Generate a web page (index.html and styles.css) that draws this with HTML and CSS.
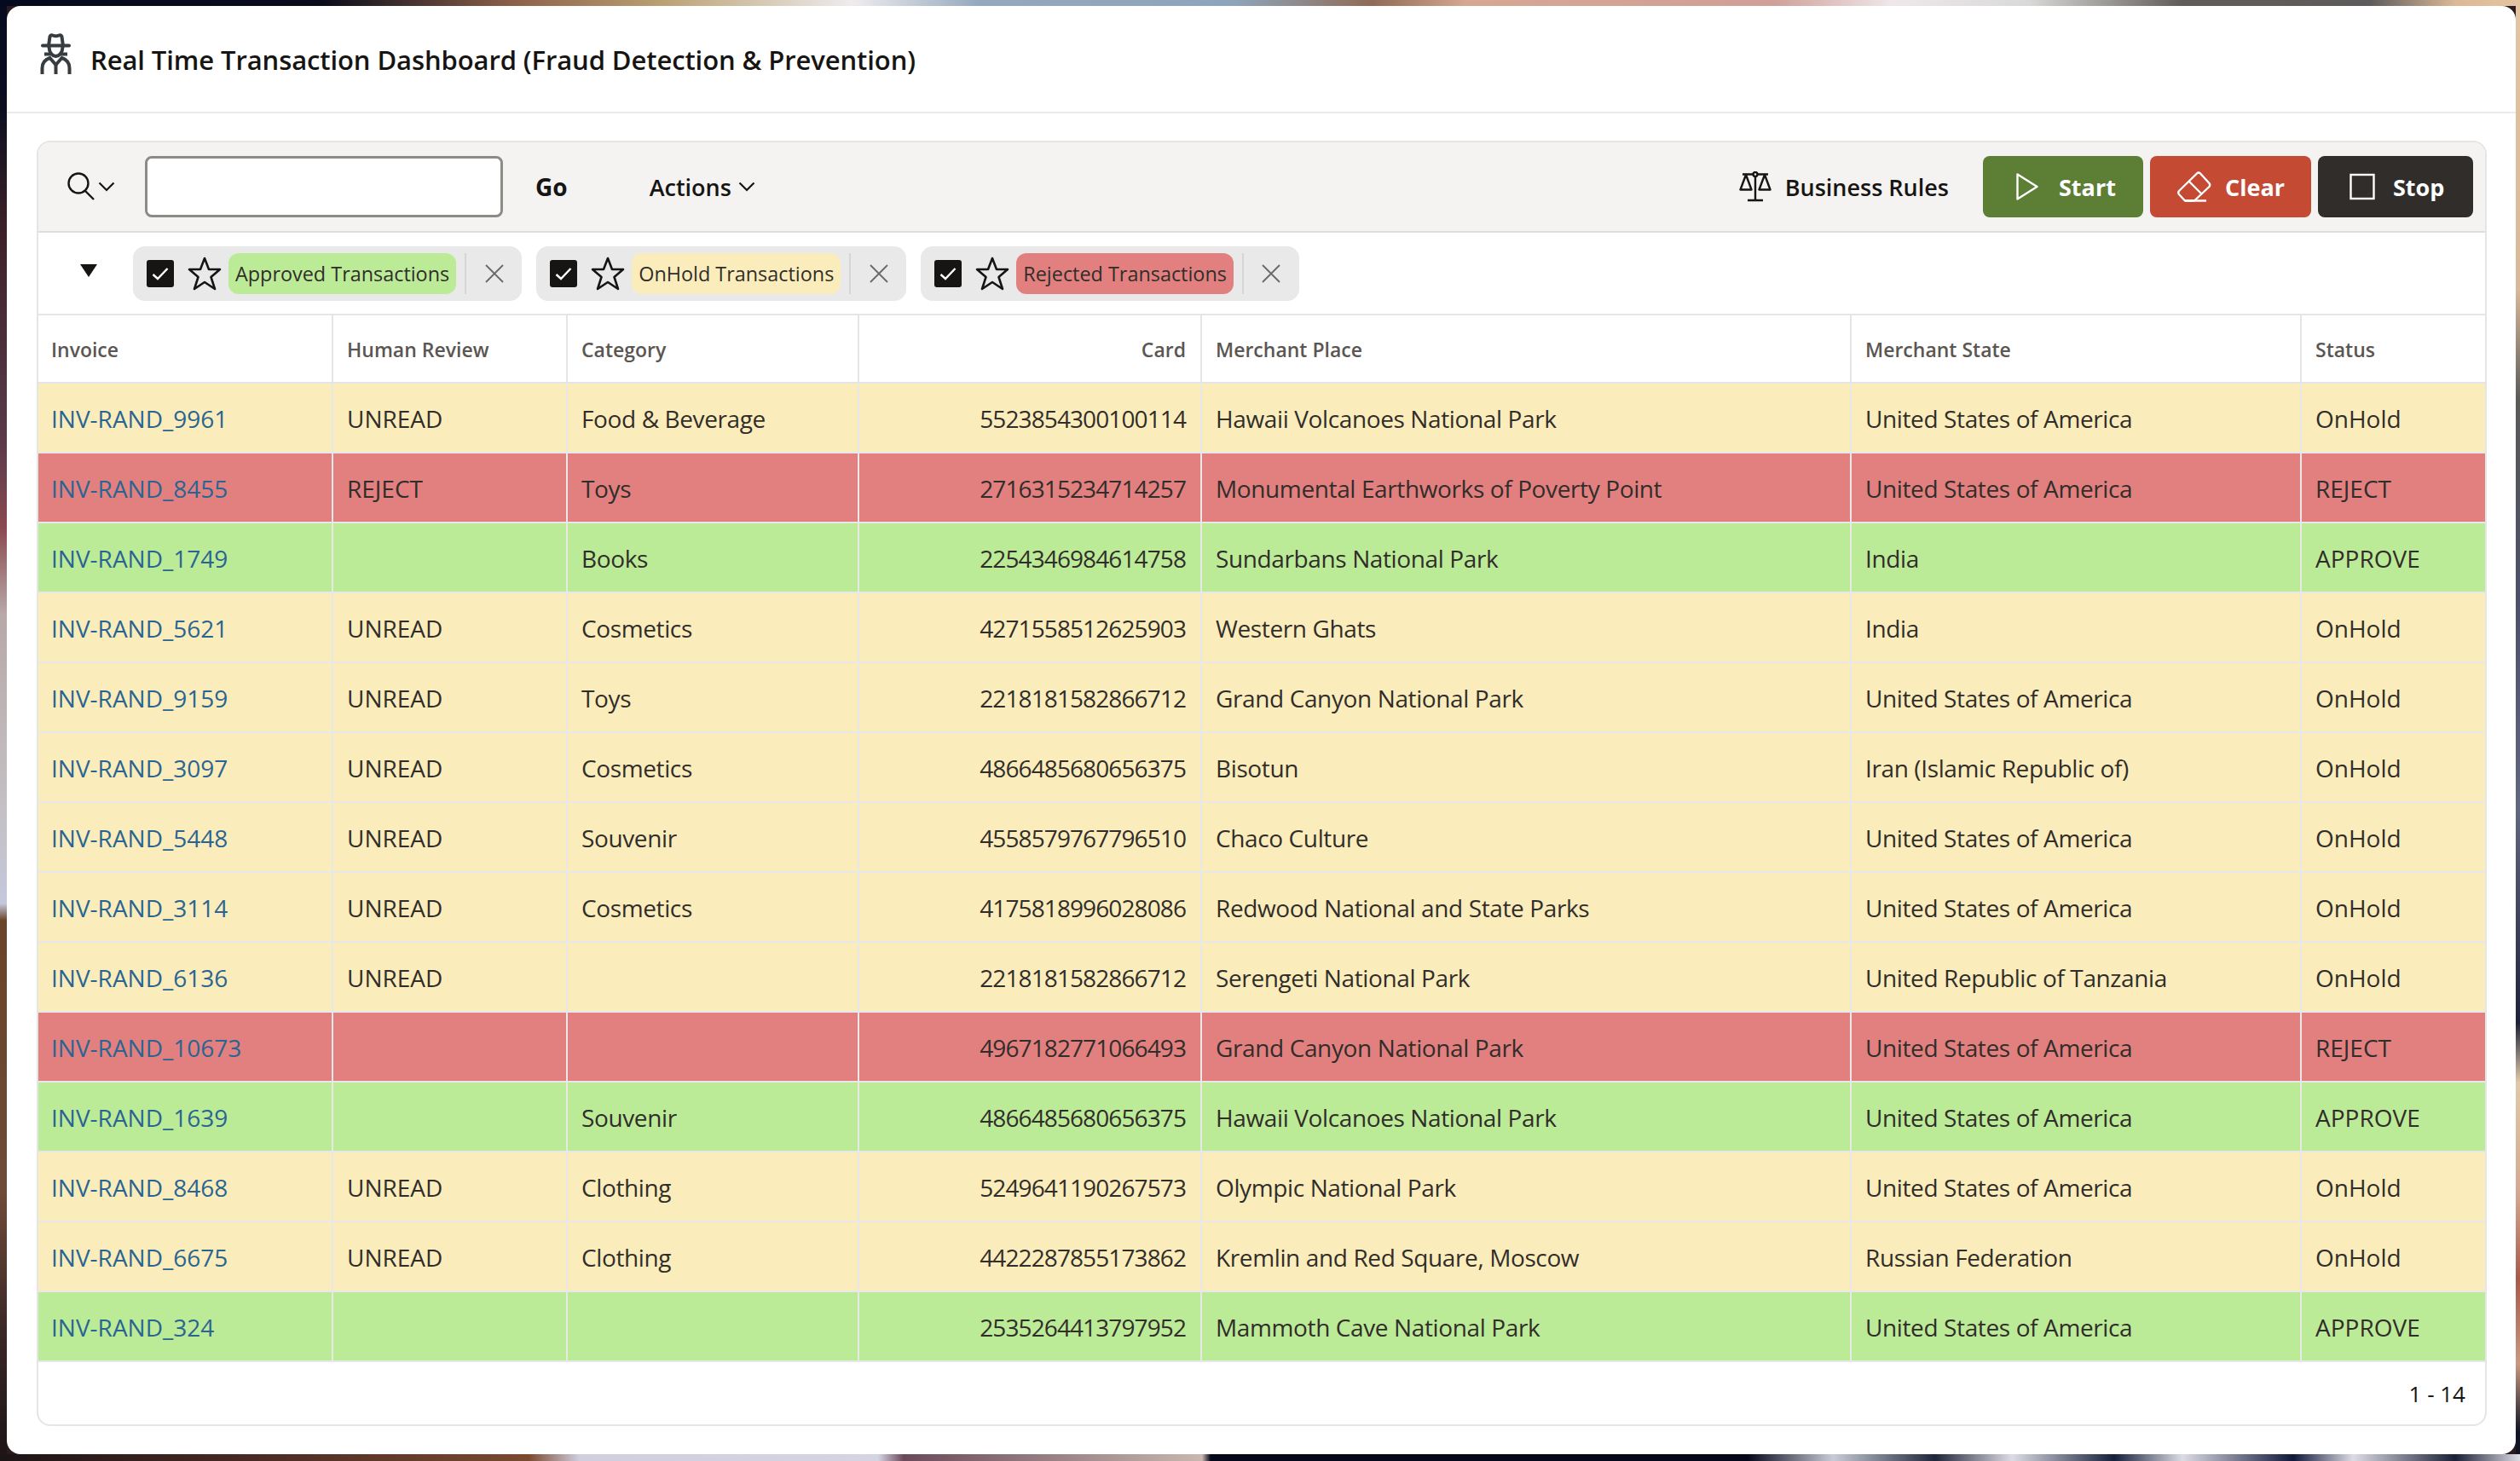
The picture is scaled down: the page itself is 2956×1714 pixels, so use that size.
FILE: index.html
```html
<!DOCTYPE html>
<html lang="en">
<head>
    <meta charset="UTF-8">
    <title>Real Time Transaction Dashboard</title>
    <link rel="stylesheet" href="styles.css">
</head>
<body>
<div class="window">
    <header class="page-head">
        <svg class="spy-icon" viewBox="0 0 37 48" fill="none" stroke="#363c40" stroke-width="4">
            <path d="M10 15 L11.500 4 Q12.500 1.500 15 2.500 Q18.500 4 22 2.500 Q24.500 1.500 25.500 4 L27 15"/>
            <path d="M3 14.500 H34" stroke-linecap="round"/>
            <path d="M10.500 16 Q11 26 18.500 27 Q26 26 26.500 16"/>
            <path d="M5 24.500 H13 M24 24.500 H32"/>
            <path d="M2.500 48 V41 Q2.500 32 11.500 29 L18.500 37 L25.500 29 Q34.500 32 34.500 41 V48"/>
            <path d="M18.500 36 V48"/>
        </svg>
        <h1>Real Time Transaction Dashboard (Fraud Detection &amp; Prevention)</h1>
    </header>

    <main class="report">
        <div class="toolbar">
            <button class="search-toggle" type="button">
                <svg width="36" height="36" viewBox="0 0 36 36" fill="none" stroke="#161513" stroke-width="2.4">
                    <circle cx="15" cy="14" r="11.5"/>
                    <path d="M23 23 L33 33"/>
                </svg>
                <svg width="20" height="12" viewBox="0 0 20 12" fill="none" stroke="#161513" stroke-width="2.2">
                    <path d="M1.5 1.5 L10 10 L18.5 1.5"/>
                </svg>
            </button>
            <input class="search-input" type="text">
            <button class="go-btn" type="button">Go</button>
            <button class="actions-btn" type="button">Actions
                <svg width="20" height="12" viewBox="0 0 20 12" fill="none" stroke="#161513" stroke-width="2.2">
                    <path d="M1.5 1.5 L10 10 L18.5 1.5"/>
                </svg>
            </button>
            <div class="toolbar-right">
                <button class="rules-btn" type="button">
                    <svg width="38" height="36" viewBox="0 0 38 36" fill="none" stroke="#161513" stroke-width="2.4">
                        <circle cx="19" cy="3.5" r="2.5"/>
                        <path d="M19 6 V33 M10 34 H28 M4 3.5 H16.5 M21.5 3.5 H34"/>
                        <path d="M8 4 L1.5 21.5 H14.5 Z M30 4 L23.5 21.5 H36.5 Z" stroke-linejoin="round"/>
                    </svg>
                    Business Rules
                </button>
                <button class="action-btn start" type="button">
                    <svg width="26" height="32" viewBox="0 0 26 32" fill="none" stroke="#fff" stroke-width="2.4">
                        <path d="M1.500 1.500 L24.500 16 L1.500 30.500 Z" stroke-linejoin="round"/>
                    </svg>
                    Start
                </button>
                <button class="action-btn clear" type="button">
                    <svg width="40" height="36" viewBox="0 0 40 36" fill="none" stroke="#fff" stroke-width="2.4">
                        <path d="M23 2.500 Q25 0.500 27 2.500 L37.500 14 Q39 16 37.500 18 L20 34.500 H9 L2 27 Q0.500 25 2 23 Z" stroke-linejoin="round"/>
                        <path d="M14 12 L28 26 M9 34.500 H34"/>
                    </svg>
                    Clear
                </button>
                <button class="action-btn stop" type="button">
                    <svg width="30" height="32" viewBox="0 0 30 32" fill="none" stroke="#fff" stroke-width="2.4">
                        <rect x="1.500" y="2" width="27" height="28"/>
                    </svg>
                    Stop
                </button>
            </div>
        </div>

        <div class="filters">
            <span class="filters-toggle"></span>
            <div class="chip">
                <span class="chip-check"><svg width="20" height="16" viewBox="0 0 20 16" fill="none" stroke="#fff" stroke-width="2.4"><path d="M1.500 9 L7 14 L18.500 2"/></svg></span>
                <svg class="chip-star" width="40" height="40" viewBox="0 0 40 40" fill="none" stroke="#161513" stroke-width="2.600" stroke-linejoin="round"><path d="M20 2 L25 15 L38 15 L27.500 24 L32 38 L20 30 L8 38 L12.500 24 L2 15 L15 15 Z"/></svg>
                <span class="chip-label approved">Approved Transactions</span>
                <button class="chip-close" type="button"><svg width="22" height="22" viewBox="0 0 22 22" stroke="#6b6965" stroke-width="1.800"><path d="M1 1 L21 21 M21 1 L1 21"/></svg></button>
            </div>
            <div class="chip">
                <span class="chip-check"><svg width="20" height="16" viewBox="0 0 20 16" fill="none" stroke="#fff" stroke-width="2.4"><path d="M1.500 9 L7 14 L18.500 2"/></svg></span>
                <svg class="chip-star" width="40" height="40" viewBox="0 0 40 40" fill="none" stroke="#161513" stroke-width="2.600" stroke-linejoin="round"><path d="M20 2 L25 15 L38 15 L27.500 24 L32 38 L20 30 L8 38 L12.500 24 L2 15 L15 15 Z"/></svg>
                <span class="chip-label onhold">OnHold Transactions</span>
                <button class="chip-close" type="button"><svg width="22" height="22" viewBox="0 0 22 22" stroke="#6b6965" stroke-width="1.800"><path d="M1 1 L21 21 M21 1 L1 21"/></svg></button>
            </div>
            <div class="chip">
                <span class="chip-check"><svg width="20" height="16" viewBox="0 0 20 16" fill="none" stroke="#fff" stroke-width="2.4"><path d="M1.500 9 L7 14 L18.500 2"/></svg></span>
                <svg class="chip-star" width="40" height="40" viewBox="0 0 40 40" fill="none" stroke="#161513" stroke-width="2.600" stroke-linejoin="round"><path d="M20 2 L25 15 L38 15 L27.500 24 L32 38 L20 30 L8 38 L12.500 24 L2 15 L15 15 Z"/></svg>
                <span class="chip-label rejected">Rejected Transactions</span>
                <button class="chip-close" type="button"><svg width="22" height="22" viewBox="0 0 22 22" stroke="#6b6965" stroke-width="1.800"><path d="M1 1 L21 21 M21 1 L1 21"/></svg></button>
            </div>
        </div>

        <table class="grid">
            <colgroup>
                <col class="c-invoice"><col class="c-review"><col class="c-category"><col class="c-card"><col class="c-place"><col class="c-state"><col class="c-status">
            </colgroup>
            <thead>
                <tr><th>Invoice</th><th>Human Review</th><th>Category</th><th class="num">Card</th><th>Merchant Place</th><th>Merchant State</th><th>Status</th></tr>
            </thead>
            <tbody>
                <tr class="onhold"><td><a href="#">INV-RAND_9961</a></td><td>UNREAD</td><td>Food &amp; Beverage</td><td class="num">5523854300100114</td><td>Hawaii Volcanoes National Park</td><td>United States of America</td><td>OnHold</td></tr>
                <tr class="rejected"><td><a href="#">INV-RAND_8455</a></td><td>REJECT</td><td>Toys</td><td class="num">2716315234714257</td><td>Monumental Earthworks of Poverty Point</td><td>United States of America</td><td>REJECT</td></tr>
                <tr class="approved"><td><a href="#">INV-RAND_1749</a></td><td></td><td>Books</td><td class="num">2254346984614758</td><td>Sundarbans National Park</td><td>India</td><td>APPROVE</td></tr>
                <tr class="onhold"><td><a href="#">INV-RAND_5621</a></td><td>UNREAD</td><td>Cosmetics</td><td class="num">4271558512625903</td><td>Western Ghats</td><td>India</td><td>OnHold</td></tr>
                <tr class="onhold"><td><a href="#">INV-RAND_9159</a></td><td>UNREAD</td><td>Toys</td><td class="num">2218181582866712</td><td>Grand Canyon National Park</td><td>United States of America</td><td>OnHold</td></tr>
                <tr class="onhold"><td><a href="#">INV-RAND_3097</a></td><td>UNREAD</td><td>Cosmetics</td><td class="num">4866485680656375</td><td>Bisotun</td><td>Iran (Islamic Republic of)</td><td>OnHold</td></tr>
                <tr class="onhold"><td><a href="#">INV-RAND_5448</a></td><td>UNREAD</td><td>Souvenir</td><td class="num">4558579767796510</td><td>Chaco Culture</td><td>United States of America</td><td>OnHold</td></tr>
                <tr class="onhold"><td><a href="#">INV-RAND_3114</a></td><td>UNREAD</td><td>Cosmetics</td><td class="num">4175818996028086</td><td>Redwood National and State Parks</td><td>United States of America</td><td>OnHold</td></tr>
                <tr class="onhold"><td><a href="#">INV-RAND_6136</a></td><td>UNREAD</td><td></td><td class="num">2218181582866712</td><td>Serengeti National Park</td><td>United Republic of Tanzania</td><td>OnHold</td></tr>
                <tr class="rejected"><td><a href="#">INV-RAND_10673</a></td><td></td><td></td><td class="num">4967182771066493</td><td>Grand Canyon National Park</td><td>United States of America</td><td>REJECT</td></tr>
                <tr class="approved"><td><a href="#">INV-RAND_1639</a></td><td></td><td>Souvenir</td><td class="num">4866485680656375</td><td>Hawaii Volcanoes National Park</td><td>United States of America</td><td>APPROVE</td></tr>
                <tr class="onhold"><td><a href="#">INV-RAND_8468</a></td><td>UNREAD</td><td>Clothing</td><td class="num">5249641190267573</td><td>Olympic National Park</td><td>United States of America</td><td>OnHold</td></tr>
                <tr class="onhold"><td><a href="#">INV-RAND_6675</a></td><td>UNREAD</td><td>Clothing</td><td class="num">4422287855173862</td><td>Kremlin and Red Square, Moscow</td><td>Russian Federation</td><td>OnHold</td></tr>
                <tr class="approved"><td><a href="#">INV-RAND_324</a></td><td></td><td></td><td class="num">2535264413797952</td><td>Mammoth Cave National Park</td><td>United States of America</td><td>APPROVE</td></tr>
            </tbody>
        </table>

        <div class="pager">1 - 14</div>
    </main>
</div>
</body>
</html>
```

FILE: styles.css
```css
* {
    box-sizing: border-box;
}

html, body {
    height: 100%;
    margin: 0;
    overflow: hidden;
}

/* blurred desktop wallpaper showing around the window */
body {
    padding: 7px 5px 8px 8px;
    display: flex;
    font-family: "Open Sans", "Noto Sans", sans-serif;
    color: #312d2a;
    background-color: #2a1c1e;
    background-image:
        linear-gradient(90deg, #050a1e 0, #0a0c1c 380px, #8c5f48 600px, #bba274 780px, #efecef 1000px, #93a8bd 1150px, #8ea4ba 1450px, #8f6b55 1610px, #d7a793 1720px, #cf9f98 2080px, #efe8ea 2220px, #d9d9d8 2380px, #605c58 2560px, #5d5b5b 2780px, #dcb996 2880px, #e4c4a0 2956px),
        linear-gradient(90deg, #1c1416 0, #4a2a24 300px, #7a4a30 620px, #d0cfe0 680px, #d4d4e2 1030px, #6a4a5a 1060px, #c8b8b0 1410px, #05081a 1420px, #05081a 2050px, #c8ccd8 2150px, #20263a 2270px, #dcdce4 2360px, #15203a 2480px, #dcdce4 2560px, #10183a 2690px, #dcdce4 2760px, #1a2036 2880px, #dcdce4 2956px),
        linear-gradient(180deg, #050a1e 0, #0c0e20 130px, #3a2028 260px, #5a3a4a 520px, #8a4a50 620px, #b8a8a8 720px, #c4c0c4 950px, #c4c8dc 1060px, #6a4428 1080px, #6e4a38 1400px, #3a2826 1560px, #1c1416 1714px),
        linear-gradient(180deg, #e4c4a0 0, #d8b898 340px, #5a5a58 470px, #4a5068 700px, #60687e 950px, #1e2238 1200px, #e0c8a8 1270px, #d4a890 1400px, #a85a48 1500px, #c89880 1600px, #101424 1680px, #101424 1714px);
    background-repeat: no-repeat;
    background-size: 100% 7px, 100% 8px, 8px 100%, 5px 100%;
    background-position: top left, bottom left, top left, top right;
}

.window {
    flex: 1;
    display: flex;
    flex-direction: column;
    background: #fff;
    border-radius: 16px;
    padding-bottom: 33px;
}

.page-head {
    height: 126px;
    display: flex;
    align-items: center;
    padding: 2px 0 0 39px;
    gap: 22px;
    border-bottom: 2px solid #ebebeb;
    flex-shrink: 0;
}

.spy-icon {
    width: 37px;
    height: 48px;
    margin-bottom: 14px;
}

h1 {
    margin: 0;
    font-size: 31px;
    font-weight: 600;
    letter-spacing: -0.1px;
    color: #161513;
}

.report {
    flex: 1;
    margin: 32px 34px 0 35px;
    border: 2px solid #e5e5e5;
    border-radius: 16px;
    overflow: hidden;
    display: flex;
    flex-direction: column;
}

button {
    font-family: inherit;
    border: 0;
    background: none;
    padding: 0;
    cursor: pointer;
}

/* toolbar */
.toolbar {
    height: 106px;
    display: flex;
    align-items: center;
    padding: 0 14px 0 32px;
    background: #f4f3f1;
    border-bottom: 2px solid #dfdedc;
    flex-shrink: 0;
}

.search-toggle {
    display: flex;
    align-items: center;
    gap: 2px;
    width: 93px;
}

.search-input {
    width: 420px;
    height: 72px;
    background: #fff;
    border: 3px solid #8c8b88;
    border-radius: 8px;
}

.go-btn {
    margin-left: 38px;
    font-size: 28px;
    font-weight: 700;
    color: #161513;
}

.actions-btn {
    margin-left: 96px;
    display: flex;
    align-items: center;
    gap: 8px;
    font-size: 27px;
    font-weight: 600;
    color: #161513;
}

.toolbar-right {
    margin-left: auto;
    display: flex;
    align-items: center;
    gap: 8px;
}

.rules-btn {
    display: flex;
    align-items: center;
    gap: 16px;
    margin-right: 32px;
    font-size: 27px;
    font-weight: 600;
    color: #161513;
}

.action-btn {
    height: 72px;
    display: flex;
    align-items: center;
    border-radius: 8px;
    color: #fff;
    font-size: 27px;
    font-weight: 700;
}

.start { width: 188px; padding-left: 39px; gap: 24px; background: #5d7f35; }
.clear { width: 189px; padding-left: 32px; gap: 16px; background: #c44a33; }
.stop { width: 182px; padding-left: 37px; gap: 21px; background: #312d2a; }

/* saved filters */
.filters {
    height: 97px;
    display: flex;
    align-items: center;
    gap: 17px;
    border-bottom: 2px solid #e5e5e5;
    flex-shrink: 0;
}

.filters-toggle {
    width: 0;
    height: 0;
    margin: 0 25px 6px 49px;
    border-left: 10px solid transparent;
    border-right: 10px solid transparent;
    border-top: 15px solid #161513;
}

.chip {
    height: 64px;
    display: flex;
    align-items: center;
    padding-left: 16px;
    background: #e9e9e9;
    border-radius: 14px;
}

.chip-check {
    width: 32px;
    height: 32px;
    display: flex;
    align-items: center;
    justify-content: center;
    background: #161513;
    border-radius: 3px;
}

.chip-star {
    margin: 0 8px 0 16px;
}

.chip-label {
    height: 48px;
    display: flex;
    align-items: center;
    padding: 0 8px;
    border-radius: 12px;
    font-size: 23.4px;
    color: #312d2a;
}

.chip-label.approved { background: #bceb98; }
.chip-label.onhold { background: #fbedbb; }
.chip-label.rejected { background: #e28080; }

.chip-close {
    display: flex;
    align-items: center;
    justify-content: center;
    width: 67px;
    height: 48px;
    margin-left: 10px;
    border-left: 2px solid #d6d6d6;
}

/* report table */
.grid {
    width: 100%;
    table-layout: fixed;
    border-collapse: separate;
    border-spacing: 0;
    flex-shrink: 0;
}

.c-invoice { width: 344px; }
.c-review { width: 275px; }
.c-category { width: 342px; }
.c-card { width: 402px; }
.c-place { width: 762px; }
.c-state { width: 528px; }
.c-status { width: 217px; }

.grid th {
    height: 80px;
    padding: 2px 17px 0 16px;
    text-align: left;
    font-size: 23px;
    font-weight: 600;
    color: #5b5652;
    background: #fff;
    border-left: 2px solid #e5e5e5;
    border-bottom: 2px solid #e5e5e5;
}

.grid td {
    height: 82px;
    padding: 1px 17px 0 16px;
    font-size: 28px;
    letter-spacing: -0.38px;
    border-left: 2px solid #e8e8e8;
    border-bottom: 2px solid #e8e8e8;
    white-space: nowrap;
}

.grid th:first-child,
.grid td:first-child {
    border-left: 0;
    padding-left: 15px;
}

.grid td:first-child,
.grid td:nth-child(2),
.grid td:last-child {
    letter-spacing: 0;
}

.grid th.num {
    text-align: right;
}

.grid td.num {
    text-align: right;
    letter-spacing: -0.9px;
}

.grid a {
    color: #2a6592;
    text-decoration: none;
}

tr.onhold td { background: #fbedbb; }
tr.rejected td { background: #e28080; }
tr.approved td { background: #bceb98; }

.pager {
    flex: 1;
    display: flex;
    align-items: center;
    justify-content: flex-end;
    padding: 0 23px 0 0;
    font-size: 26px;
    color: #161513;
}
```
